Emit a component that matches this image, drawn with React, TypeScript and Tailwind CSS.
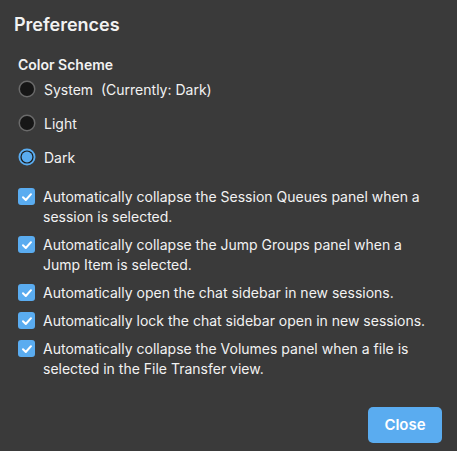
import { useState } from "react";

const options = [
  { id: "system", label: "System\u00a0\u00a0(Currently: Dark)" },
  { id: "light", label: "Light" },
  { id: "dark", label: "Dark" },
];

const toggles = [
  "Automatically collapse the Session Queues panel when a session is selected.",
  "Automatically collapse the Jump Groups panel when a Jump Item is selected.",
  "Automatically open the chat sidebar in new sessions.",
  "Automatically lock the chat sidebar open in new sessions.",
  "Automatically collapse the Volumes panel when a file is selected in the File Transfer view.",
];

function Radio({ on }: { on: boolean }) {
  return (
    <svg width="18" height="18" viewBox="0 0 18 18" className="shrink-0">
      {on ? (
        <>
          <circle cx="9" cy="9" r="8.5" fill="#5aacf0" />
          <circle cx="9" cy="9" r="6.6" fill="#1b1b1b" />
          <circle cx="9" cy="9" r="5.4" fill="#5aacf0" />
        </>
      ) : (
        <>
          <circle cx="9" cy="9" r="8.5" fill="#6a6a6a" />
          <circle cx="9" cy="9" r="7" fill="#161616" />
        </>
      )}
    </svg>
  );
}

function Check() {
  return (
    <span className="mt-[1px] flex h-[17px] w-[17px] shrink-0 items-center justify-center rounded-[3px] bg-[#5aacf0]">
      <svg width="12" height="12" viewBox="0 0 12 12">
        <path d="M2 6.3 L4.8 9 L10 3.2" fill="none" stroke="#fff" strokeWidth="2" strokeLinecap="round" strokeLinejoin="round" />
      </svg>
    </span>
  );
}

export default function App() {
  const [scheme, setScheme] = useState("dark");

  return (
    <div className="flex h-[451px] w-[457px] flex-col bg-[#3a3a3a] text-[#f2f2f2] font-['Inter',sans-serif]">
      <h1 className="px-[14px] pt-[12px] text-[18px] font-semibold leading-[26px]">Preferences</h1>

      <div className="px-[18px] pt-[18px]">
        <h2 className="text-[14px] font-semibold leading-[18px]">Color Scheme</h2>
        <div className="mt-[6px] flex flex-col gap-[16px]">
          {options.map((o) => (
            <label key={o.id} className="flex h-[18px] cursor-pointer items-center gap-[8px] text-[14px]" onClick={() => setScheme(o.id)}>
              <Radio on={scheme === o.id} />
              <span>{o.label}</span>
            </label>
          ))}
        </div>

        <div className="mt-[21px] flex flex-col gap-[8px]">
          {toggles.map((t) => (
            <label key={t} className="flex items-start gap-[8px] text-[14px] leading-[20px]">
              <Check />
              <span className="pr-[12px]">{t}</span>
            </label>
          ))}
        </div>
      </div>

      <div className="mt-auto flex justify-end px-[15px] pb-[8px]">
        <button className="h-[36px] w-[74px] rounded-[5px] bg-[#5aacf0] text-[15px] font-semibold text-white">Close</button>
      </div>
    </div>
  );
}
